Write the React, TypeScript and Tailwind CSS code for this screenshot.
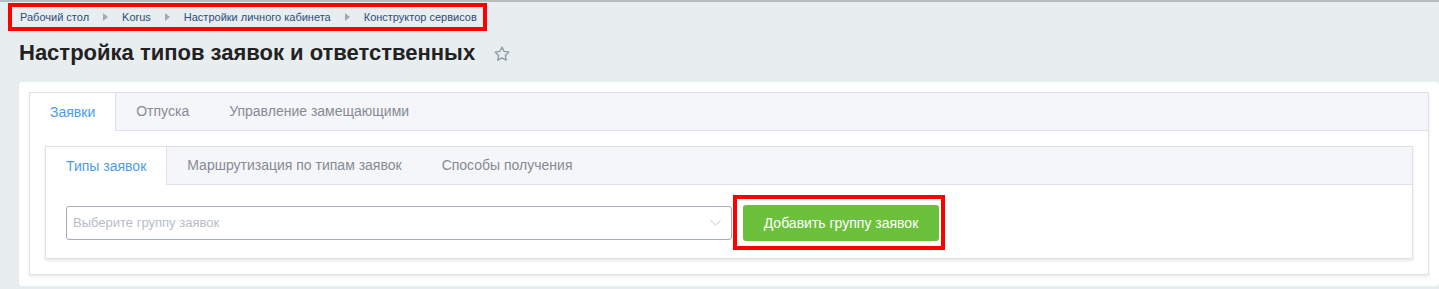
import React from 'react';

const crumbs = ['Рабочий стол', 'Korus', 'Настройки личного кабинета', 'Конструктор сервисов'];

function Tabs({ items, active }: { items: string[]; active: number }) {
  return (
    <div className="flex h-[38px] bg-[#f5f6fa] border-b border-[#dfe1ea]">
      {items.map((t, i) =>
        i === active ? (
          <div key={t} className="flex items-center px-[20px] bg-white border-r border-[#dfe1ea] -mb-px text-[#4a9cf2]">
            {t}
          </div>
        ) : (
          <div key={t} className="flex items-center px-[20px] text-[#868b93]">
            {t}
          </div>
        )
      )}
    </div>
  );
}

export default function App() {
  return (
    <div className="w-[1439px] h-[289px] bg-[#e8eef0] border-t-2 border-[#b9bcbf] overflow-hidden" style={{ fontFamily: '"Liberation Sans", Arial, sans-serif' }}>
      {/* хлебные крошки */}
      <div className="ml-[8px] mt-[1px] w-[479px] h-[28px] border-4 border-[#ff0000] flex items-center pl-[8px] text-[11px] text-[#2c4d7e]">
        {crumbs.map((c, i) => (
          <React.Fragment key={c}>
            {i > 0 && (
              <svg width="5" height="8" viewBox="0 0 5 8" className="mx-[14px]">
                <path d="M0 0L5 4L0 8Z" fill="#a3a9b0" />
              </svg>
            )}
            <span>{c}</span>
          </React.Fragment>
        ))}
      </div>

      <div className="flex items-center ml-[19px] mt-[10px] h-[24px]">
        <h1 className="text-[22px] font-bold text-[#222] leading-none">Настройка типов заявок и ответственных</h1>
        <svg width="18" height="18" viewBox="0 0 24 24" className="ml-[18px] mt-[2px]">
          <path d="M12 2.8l2.8 5.8 6.3.9-4.6 4.4 1.1 6.3L12 17.2l-5.6 3 1.1-6.3-4.6-4.4 6.3-.9z" fill="none" stroke="#8d99a6" strokeWidth="1.8" strokeLinejoin="round" />
        </svg>
      </div>

      <div className="ml-[19px] mt-[17px] bg-white rounded-[4px] p-[10px] pb-[11px]">
        <div className="border border-[#dfe1ea] shadow-[0_2px_3px_rgba(0,0,0,0.08)] text-[14px]">
          <Tabs items={['Заявки', 'Отпуска', 'Управление замещающими']} active={0} />
          <div className="p-[15px]">
            <div className="border border-[#dfe1ea] shadow-[0_2px_3px_rgba(0,0,0,0.09)]">
              <Tabs items={['Типы заявок', 'Маршрутизация по типам заявок', 'Способы получения']} active={0} />
              <div className="flex items-center px-[20px] pt-[10px] pb-[8px]">
                <div className="w-[666px] h-[34px] border border-[#a4acb5] rounded-[3px] flex items-center justify-between pl-[6px] pr-[10px]">
                  <span className="text-[13px] text-[#b7bdc5]">Выберите группу заявок</span>
                  <svg width="11" height="6" viewBox="0 0 11 6">
                    <path d="M0.5 0.5L5.5 5L10.5 0.5" fill="none" stroke="#c3c8ce" strokeWidth="1" />
                  </svg>
                </div>
                <div className="ml-[1px] border-4 border-[#ff0000] pt-[6px] pb-[5px] pl-[6px] pr-[2px]">
                  <button className="w-[196px] h-[36px] bg-[#6bc13b] rounded-[3px] text-white text-[14px]">
                    Добавить группу заявок
                  </button>
                </div>
              </div>
            </div>
          </div>
        </div>
      </div>
    </div>
  );
}
